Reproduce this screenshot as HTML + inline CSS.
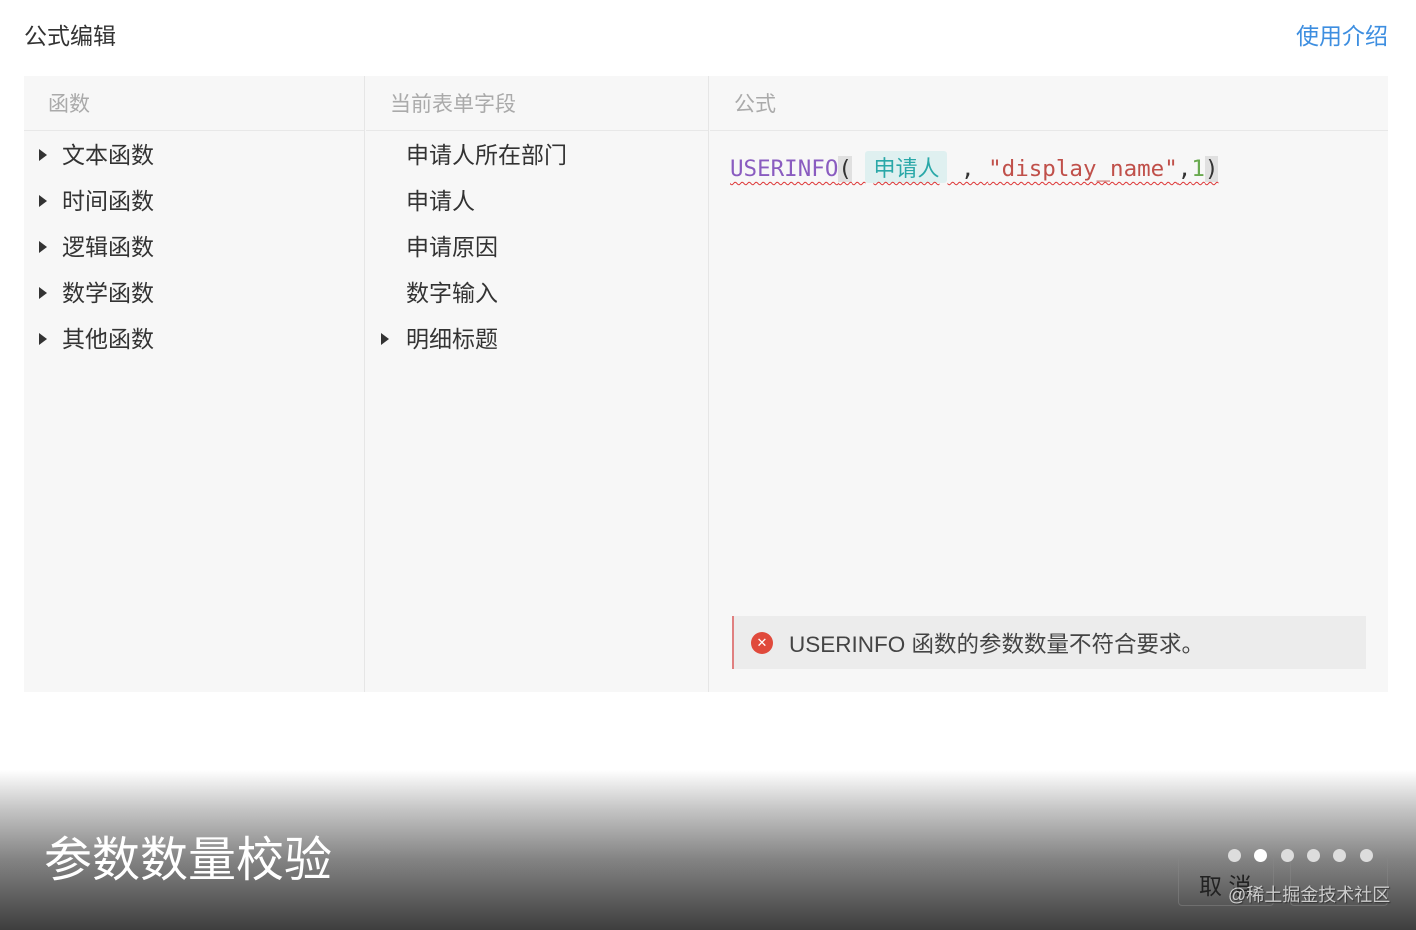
<!DOCTYPE html>
<html><head><meta charset="utf-8"><style>
*{margin:0;padding:0;box-sizing:border-box}
body{width:1416px;height:930px;background:#fff;position:relative;overflow:hidden;font-family:"Liberation Sans","Noto Sans CJK SC",sans-serif;color:#333}
.abs{position:absolute}
.title{left:24px;top:17px;font-size:23px;color:#333}
.help{right:28px;top:17px;font-size:23px;color:#3d8ee0}
.panel{left:24px;top:76px;width:1364px;height:616px;background:#f7f7f7}
.col{position:absolute;top:0;height:616px}
.hd{height:55px;border-bottom:1px solid #e8e8e8;font-size:21px;color:#aaa;padding:12px 0 0 24px}
.item{font-size:23px;color:#333;height:46px;line-height:46px;position:relative}
.tri{position:absolute;width:0;height:0;border-left:8px solid #333;border-top:6px solid transparent;border-bottom:6px solid transparent;top:17px}
.code{font-family:"DejaVu Sans Mono","Liberation Mono",monospace;font-size:22.5px;text-decoration:underline wavy #d33;text-decoration-thickness:1px;text-underline-offset:5px}
.bot{left:0;top:770px;width:1416px;height:160px;background:linear-gradient(#fff 0%,#c4c4c4 25%,#858585 55%,#3e3e3e 100%)}
.dot{position:absolute;top:849px;width:13px;height:13px;border-radius:50%;background:#ddd}
</style></head><body>
<div class="abs title">公式编辑</div>
<div class="abs help">使用介绍</div>
<div class="abs panel">
 <div class="col" style="left:0;width:341px;border-right:1px solid #e6e6e6">
  <div class="hd">函数</div>
  <div style="padding-top:1px">
   <div class="item" style="padding-left:38px"><span class="tri" style="left:15px"></span>文本函数</div>
   <div class="item" style="padding-left:38px"><span class="tri" style="left:15px"></span>时间函数</div>
   <div class="item" style="padding-left:38px"><span class="tri" style="left:15px"></span>逻辑函数</div>
   <div class="item" style="padding-left:38px"><span class="tri" style="left:15px"></span>数学函数</div>
   <div class="item" style="padding-left:38px"><span class="tri" style="left:15px"></span>其他函数</div>
  </div>
 </div>
 <div class="col" style="left:342px;width:343px;border-right:1px solid #e6e6e6">
  <div class="hd">当前表单字段</div>
  <div style="padding-top:1px">
   <div class="item" style="padding-left:40px">申请人所在部门</div>
   <div class="item" style="padding-left:40px">申请人</div>
   <div class="item" style="padding-left:40px">申请原因</div>
   <div class="item" style="padding-left:40px">数字输入</div>
   <div class="item" style="padding-left:40px"><span class="tri" style="left:15px"></span>明细标题</div>
  </div>
 </div>
 <div class="col" style="left:686px;width:678px">
  <div class="hd">公式</div>
  <div class="abs code" style="left:20px;top:75px;white-space:pre"><span style="color:#8a5cc0">USERINFO</span><span style="background:#e0e0e0">(</span> <span style="background:#dff0f0;color:#2aa8a8;font-family:'Noto Sans CJK SC',sans-serif;font-size:22px;padding:0 8px;border-radius:3px">申请人</span> , <span style="color:#c0504a">"display_name"</span>,<span style="color:#6aaa50">1</span><span style="background:#e0e0e0">)</span></div>
  <div class="abs" style="left:22px;top:540px;width:634px;height:53px;background:#ececec;border-left:2px solid #e08080">
   <div class="abs" style="left:17px;top:16px;width:22px;height:22px;border-radius:50%;background:#e04a3c;color:#fff;font-size:13px;text-align:center;line-height:22px">✕</div>
   <div class="abs" style="left:55px;top:11px;font-size:22.5px;color:#444">USERINFO 函数的参数数量不符合要求。</div>
  </div>
 </div>
</div>
<div class="abs bot"></div>
<div class="abs" style="left:1178px;top:856px;width:96px;height:50px;border:1px solid #888;border-radius:4px;opacity:.5"></div>
<div class="abs" style="left:1290px;top:856px;width:98px;height:50px;border:1px solid #888;border-radius:4px;opacity:.5"></div>
<div class="abs" style="left:1199px;top:867px;font-size:23px;color:#222">取 消</div>
<div class="abs" style="left:1228px;top:881px;font-size:18px;color:#ccc;text-shadow:1px 1px 1px #333">@稀土掘金技术社区</div>
<div class="dot" style="left:1228px"></div>
<div class="dot" style="left:1254px;background:#fff"></div>
<div class="dot" style="left:1281px"></div>
<div class="dot" style="left:1307px"></div>
<div class="dot" style="left:1333px"></div>
<div class="dot" style="left:1360px"></div>
<div class="abs" style="left:44px;top:820px;font-size:48px;color:#fff">参数数量校验</div>
</body></html>
